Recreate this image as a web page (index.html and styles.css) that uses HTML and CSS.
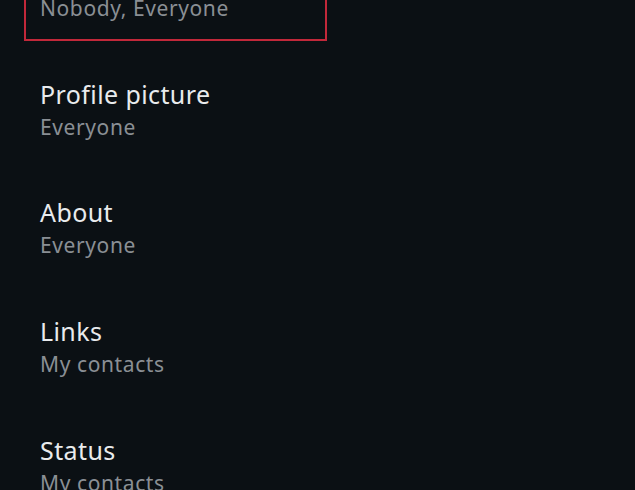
FILE: index.html
```html
<!DOCTYPE html>
<html lang="en">
<head>
  <meta charset="UTF-8">
  <title>Privacy</title>
  <link rel="stylesheet" href="styles.css">
</head>
<body>
  <ul class="settings">
    <li class="setting marked">
      <div class="text">
        <div class="title">Last seen and online</div>
        <div class="value">Nobody, Everyone</div>
      </div>
    </li>
    <li class="setting">
      <div class="text">
        <div class="title">Profile picture</div>
        <div class="value">Everyone</div>
      </div>
    </li>
    <li class="setting">
      <div class="text">
        <div class="title">About</div>
        <div class="value">Everyone</div>
      </div>
    </li>
    <li class="setting">
      <div class="text">
        <div class="title">Links</div>
        <div class="value">My contacts</div>
      </div>
    </li>
    <li class="setting">
      <div class="text">
        <div class="title">Status</div>
        <div class="value">My contacts</div>
      </div>
    </li>
  </ul>
</body>
</html>
```

FILE: styles.css
```css
html, body {
  margin: 0;
  height: 100%;
  overflow: hidden;
  background: #0b1014;
}
body {
  font-family: "Noto Sans", "Open Sans", sans-serif;
}
.settings {
  list-style: none;
  margin: -67px 0 0 0;
  padding: 0;
}
.setting {
  padding: 26px 0 26.67px 40px;
}
.setting .text {
  width: 271px;
}
.setting.marked .text {
  outline: 2px solid #c2283a;
  outline-offset: 14px;
}
.title {
  font-size: 25px;
  line-height: 33px;
  letter-spacing: 0.4px;
  color: #e9ebed;
}
.value {
  font-size: 21px;
  line-height: 33px;
  letter-spacing: 0.6px;
  color: #8a8f94;
}
```
